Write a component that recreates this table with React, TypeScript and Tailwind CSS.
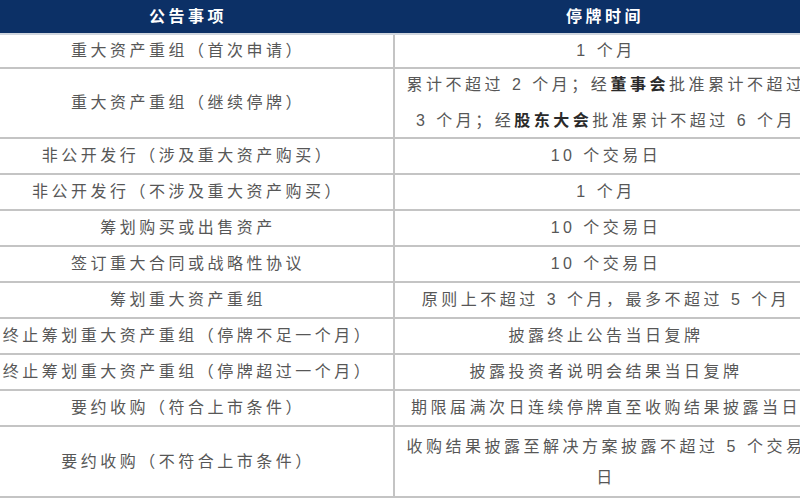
import React from "react";

type Row = {
    h: string;
    left: string;
    right: React.ReactNode[];
    leading?: string;
};

const rows: Row[] = [
    { h: "h-[34px]", left: "重大资产重组（首次申请）", right: ["1 个月"] },
    {
        h: "h-[70px]",
        left: "重大资产重组（继续停牌）",
        leading: "leading-[36px]",
        right: [
            <>
                累计不超过 2 个月；经<b className="font-bold text-[#2a2a2a]">董事会</b>批准累计不超过
            </>,
            <>
                3 个月；经<b className="font-bold text-[#2a2a2a]">股东大会</b>批准累计不超过 6 个月
            </>,
        ],
    },
    { h: "h-[36px]", left: "非公开发行（涉及重大资产购买）", right: ["10 个交易日"] },
    { h: "h-[36px]", left: "非公开发行（不涉及重大资产购买）", right: ["1 个月"] },
    { h: "h-[36px]", left: "筹划购买或出售资产", right: ["10 个交易日"] },
    { h: "h-[36px]", left: "签订重大合同或战略性协议", right: ["10 个交易日"] },
    { h: "h-[36px]", left: "筹划重大资产重组", right: ["原则上不超过 3 个月，最多不超过 5 个月"] },
    { h: "h-[36px]", left: "终止筹划重大资产重组（停牌不足一个月）", right: ["披露终止公告当日复牌"] },
    { h: "h-[36px]", left: "终止筹划重大资产重组（停牌超过一个月）", right: ["披露投资者说明会结果当日复牌"] },
    { h: "h-[36px]", left: "要约收购（符合上市条件）", right: ["期限届满次日连续停牌直至收购结果披露当日"] },
    {
        h: "h-[71px]",
        left: "要约收购（不符合上市条件）",
        leading: "leading-[31px]",
        right: ["收购结果披露至解决方案披露不超过 5 个交易", "日"],
    },
];

export default function App() {
    return (
        <div
            className="w-[800px] h-[500px] overflow-hidden bg-white"
            style={{ fontFamily: '"Liberation Sans", "Noto Sans CJK SC", sans-serif' }}
        >
            <div className="-ml-[17px] w-[834px] grid grid-cols-[410px_424px] text-[16px] tracking-[3.5px] text-[#575757]">
                {/* header */}
                <div className="h-[35px] bg-[#0c3066] flex items-center justify-center text-white font-bold border-b-2 border-[#d0d6de]">
                    公告事项
                </div>
                <div className="h-[35px] bg-[#0c3066] flex items-center justify-center text-white font-bold border-b-2 border-[#d0d6de]">
                    停牌时间
                </div>

                {rows.map((r, i) => (
                    <React.Fragment key={i}>
                        <div
                            className={`${r.h} flex items-center justify-center whitespace-nowrap border-b-2 border-[#c4c4c4]`}
                        >
                            {r.left}
                        </div>
                        <div
                            className={`${r.h} flex flex-col items-center justify-center whitespace-nowrap border-b-2 border-l-2 border-[#c4c4c4] ${r.leading ?? ""}`}
                        >
                            {r.right.map((line, j) => (
                                <div key={j}>{line}</div>
                            ))}
                        </div>
                    </React.Fragment>
                ))}
            </div>
        </div>
    );
}
